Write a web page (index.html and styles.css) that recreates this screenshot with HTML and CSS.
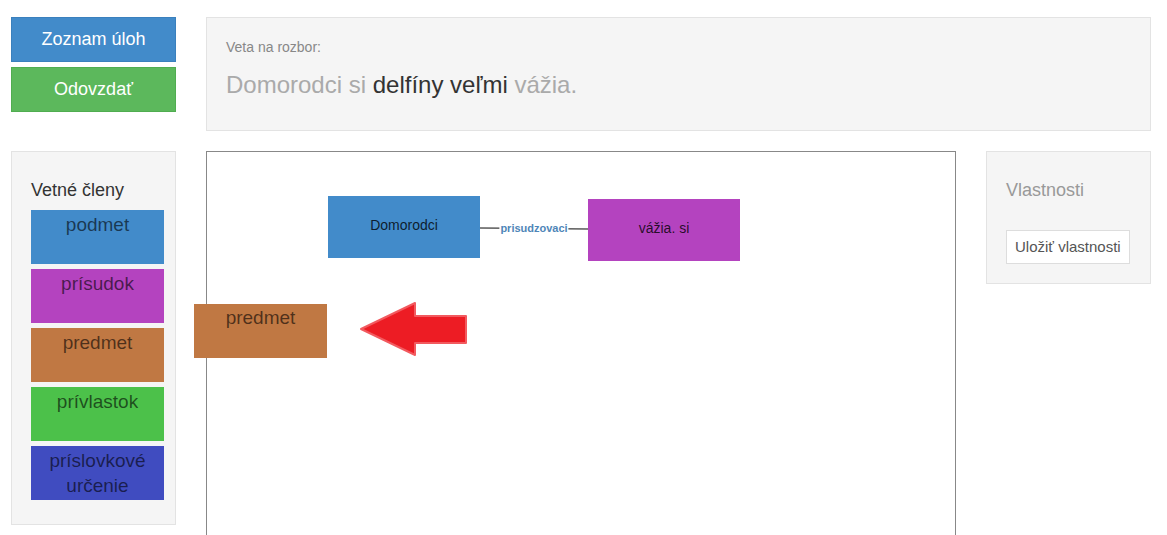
FILE: index.html
```html
<!DOCTYPE html>
<html lang="sk">
<head>
<meta charset="utf-8">
<title>Rozbor vety</title>
<link rel="stylesheet" href="styles.css">
</head>
<body>
<div class="page">
  <div class="actions">
    <button class="btn btn-blue">Zoznam úloh</button>
    <button class="btn btn-green">Odovzdať</button>
  </div>
  <div class="well sentence-panel">
    <div class="sentence-label">Veta na rozbor:</div>
    <div class="sentence"><span class="done">Domorodci si</span> <span class="todo">delfíny veľmi</span> <span class="done">vážia.</span></div>
  </div>

  <div class="well members">
    <div class="panel-title">Vetné členy</div>
    <div class="member m-podmet">podmet</div>
    <div class="member m-prisudok">prísudok</div>
    <div class="member m-predmet">predmet</div>
    <div class="member m-privlastok">prívlastok</div>
    <div class="member m-urcenie">príslovkové určenie</div>
  </div>

  <div class="canvas">
    <svg class="links" width="748" height="600" viewBox="0 0 748 600">
      <line x1="273" y1="76" x2="381" y2="77" stroke="#5a5a5a" stroke-width="1.6"/>
    </svg>
    <span class="link-label">prisudzovaci</span>
    <div class="node n-blue node-a">Domorodci</div>
    <div class="node n-purple node-b">vážia. si</div>
    <svg class="arrow" width="130" height="75" viewBox="0 0 130 75">
      <polygon points="14,37 68,11 68,24 119,24 119,51 68,51 68,63" fill="#ed1c24" stroke="#f25a5f" stroke-width="2" stroke-linejoin="round"/>
    </svg>
    <div class="member m-predmet dragged">predmet</div>
  </div>

  <div class="well props">
    <div class="panel-title muted">Vlastnosti</div>
    <button class="btn-save">Uložiť vlastnosti</button>
  </div>
</div>
</body>
</html>
```

FILE: styles.css
```css
* { box-sizing: border-box; }

html, body {
  margin: 0;
  padding: 0;
  background: #fff;
  font-family: "Liberation Sans", Arial, sans-serif;
  color: #333;
}

.page {
  display: grid;
  grid-template-columns: 165px 750px 165px;
  column-gap: 30px;
  row-gap: 20px;
  padding: 17px 0 0 11px;
  align-items: start;
}

.actions {
  display: flex;
  flex-direction: column;
  gap: 5px;
}

.btn {
  height: 45px;
  border: 1px solid transparent;
  color: #fff;
  font-family: inherit;
  font-size: 18px;
  padding: 0;
  margin: 0;
}
.btn-blue { background: #428bca; border-color: #3a80bd; }
.btn-green { background: #5cb85c; border-color: #50ad50; }

.well {
  background: #f5f5f5;
  border: 1px solid #e3e3e3;
  padding: 19px;
}

.sentence-panel {
  grid-column: 2 / 4;
  height: 114px;
}
.sentence-label {
  font-size: 14px;
  line-height: 20px;
  color: #888;
}
.sentence {
  margin-top: 15px;
  font-size: 24px;
  line-height: 26.4px;
}
.sentence .done { color: #aaa; }
.sentence .todo { color: #333; }

.panel-title {
  margin-top: 10px;
  font-size: 18px;
  line-height: 19.8px;
  color: #333;
}
.members .panel-title { margin-bottom: 9px; }
.panel-title.muted { color: #999; margin-bottom: 29px; }

.member {
  width: 133px;
  height: 54px;
  margin-bottom: 5px;
  padding-top: 2px;
  text-align: center;
  font-size: 19px;
  line-height: 25px;
  color: rgba(0, 0, 0, 0.6);
}
.m-podmet { background: #428bca; }
.m-prisudok { background: #b443bf; }
.m-predmet { background: #c07843; }
.m-privlastok { background: #4cc14a; }
.m-urcenie { background: #404cc0; }

.canvas {
  position: relative;
  height: 600px;
  border: 1px solid #888;
  background: #fff;
}

.links {
  position: absolute;
  left: 0;
  top: 0;
}

.link-label {
  position: absolute;
  left: 327px;
  top: 76px;
  transform: translate(-50%, -50%);
  background: #fff;
  padding: 0 1px;
  font-size: 11px;
  font-weight: bold;
  line-height: 13px;
  color: #4f86b8;
}

.node {
  position: absolute;
  width: 152px;
  height: 62px;
  padding-top: 19px;
  text-align: center;
  font-size: 14px;
  line-height: 20px;
  color: rgba(0, 0, 0, 0.8);
}
.n-blue { background: #428bca; }
.n-purple { background: #b443bf; }
.node-a { left: 121px; top: 44px; }
.node-b { left: 381px; top: 47px; }

.arrow {
  position: absolute;
  left: 140px;
  top: 140px;
}

.dragged {
  position: absolute;
  left: -13px;
  top: 152px;
  margin: 0;
  padding-top: 1px;
}

.btn-save {
  display: block;
  background: #fff;
  border: 1px solid #ddd;
  padding: 7px 8px;
  font-family: inherit;
  font-size: 15px;
  line-height: 18px;
  color: #555;
  margin: 0;
}
```
